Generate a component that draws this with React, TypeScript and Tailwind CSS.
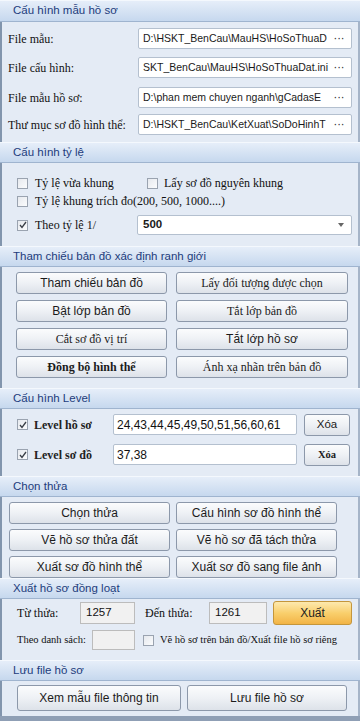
import React from 'react';

const sans = { fontFamily: '"Liberation Sans", Arial, sans-serif' };
const serif = { fontFamily: '"Liberation Serif", "Times New Roman", serif' };

function Header({ title, h = 'h-[21px]' }: { title: string; h?: string }) {
    return (
        <div
            className={`${h} flex items-center pl-[13px] border-t border-b border-t-[#f4f8fd] border-b-[#9fb4cf] bg-gradient-to-b from-[#e6eef9] to-[#c6d8ee] text-[11.5px] text-[#1d3c7c]`}
            style={sans}
        >
            {title}
        </div>
    );
}

function Body({ h, children, className = '' }: { h: string; children: React.ReactNode; className?: string }) {
    return (
        <div className={`${h} overflow-hidden border-l-2 border-r-2 border-l-[#8295ad] border-r-[#a5b4c8] bg-[#e4ebf5] ${className}`}>
            {children}
        </div>
    );
}

function PathInput({ value }: { value: string }) {
    return (
        <div className="w-[214px] h-[21px] flex items-center justify-between bg-white border border-[#b4c0cf] rounded-[2px] pl-[4px] pr-[6px]">
            <span className="whitespace-nowrap text-[10.5px] text-[#1a1a1a]" style={sans}>{value}</span>
            <span className="text-[10px] text-[#333] tracking-[1px]">···</span>
        </div>
    );
}

function Check({ checked = false }: { checked?: boolean }) {
    return (
        <div className="w-[11px] h-[11px] shrink-0 border border-[#9aa3b0] bg-gradient-to-br from-[#e6e9ee] to-[#fbfcfd] flex items-center justify-center">
            {checked && (
                <svg width="8" height="8" viewBox="0 0 8 8">
                    <path d="M1 4 L3 6.5 L7 1" stroke="#3a3f47" strokeWidth="1.3" fill="none" />
                </svg>
            )}
        </div>
    );
}

function Btn({ children, font = sans, bold = false, h = 'h-[22px]', size = 'text-[12px]' }: { children: React.ReactNode; font?: React.CSSProperties; bold?: boolean; h?: string; size?: string }) {
    return (
        <div
            className={`${h} flex items-center justify-center rounded-[3px] border border-[#8c98aa] bg-gradient-to-b from-[#fbfcfd] via-[#eef1f5] to-[#dde2e9] ${size} text-[#1b1b1b] whitespace-nowrap ${bold ? 'font-bold' : ''}`}
            style={font}
        >
            {children}
        </div>
    );
}

export default function App() {
    return (
        <div className="w-[360px] h-[721px] bg-[#dfe7f1] overflow-hidden">
            {/* Cấu hình mẫu hồ sơ */}
            <Header title="Cấu hình mẫu hồ sơ" h="h-[22px]" />
            <Body h="h-[120px]" className="pt-[6px] pl-[6px]">
                {[
                    { label: 'File mẫu:', value: 'D:\\HSKT_BenCau\\MauHS\\HoSoThuaD', mt: '' },
                    { label: 'File cấu hình:', value: 'SKT_BenCau\\MauHS\\HoSoThuaDat.ini', mt: 'mt-[8px]' },
                    { label: 'File mẫu hồ sơ:', value: 'D:\\phan mem chuyen nganh\\gCadasE', mt: 'mt-[9px]' },
                    { label: 'Thư mục sơ đồ hình thể:', value: 'D:\\HSKT_BenCau\\KetXuat\\SoDoHinhT', mt: 'mt-[6px]' },
                ].map((row) => (
                    <div key={row.label} className={`flex items-center ${row.mt}`}>
                        <span className="w-[130px] text-[12px] text-[#111] whitespace-nowrap" style={serif}>{row.label}</span>
                        <PathInput value={row.value} />
                    </div>
                ))}
            </Body>

            {/* Cấu hình tỷ lệ */}
            <Header title="Cấu hình tỷ lệ" />
            <Body h="h-[83px]" className="pt-[12px] pl-[15px]">
                <div className="h-[16px] flex items-center text-[12px] text-[#111]" style={serif}>
                    <div className="w-[130px] flex items-center gap-[7px]">
                        <Check />
                        <span>Tỷ lệ vừa khung</span>
                    </div>
                    <div className="flex items-center gap-[6px]">
                        <Check />
                        <span>Lấy sơ đồ nguyên khung</span>
                    </div>
                </div>
                <div className="mt-[2px] h-[16px] flex items-center gap-[7px] text-[12px] text-[#111]" style={serif}>
                    <Check />
                    <span>Tỷ lệ khung trích đo(200, 500, 1000....)</span>
                </div>
                <div className="mt-[6px] h-[20px] flex items-center text-[12px] text-[#111]" style={serif}>
                    <div className="w-[120px] flex items-center gap-[7px]">
                        <Check checked />
                        <span>Theo tỷ lệ 1/</span>
                    </div>
                    <div className="w-[215px] h-[20px] flex items-center justify-between bg-white border border-[#b4c0cf] rounded-[2px] pl-[5px] pr-[7px]">
                        <span className="text-[11.5px] text-[#1a1a1a] font-bold" style={sans}>500</span>
                        <svg width="6" height="4" viewBox="0 0 6 4"><path d="M0 0 H6 L3 4 Z" fill="#666" /></svg>
                    </div>
                </div>
            </Body>

            {/* Tham chiếu bản đồ */}
            <Header title="Tham chiếu bản đồ xác định ranh giới" />
            <Body h="h-[121px]" className="pt-[5px] pl-[14px]">
                <div className="grid grid-cols-[151px_172px] gap-x-[9px] gap-y-[6px]">
                    <Btn>Tham chiếu bản đồ</Btn>
                    <Btn font={serif}>Lấy đối tượng được chọn</Btn>
                    <Btn>Bật lớp bản đồ</Btn>
                    <Btn font={serif}>Tắt lớp bản đồ</Btn>
                    <Btn font={serif}>Cắt sơ đồ vị trí</Btn>
                    <Btn>Tắt lớp hồ sơ</Btn>
                    <Btn font={serif} bold>Đồng bộ hình thể</Btn>
                    <Btn font={serif}>Ánh xạ nhãn trên bản đồ</Btn>
                </div>
            </Body>

            {/* Cấu hình Level */}
            <Header title="Cấu hình Level" />
            <Body h="h-[67px]" className="pt-[5px] pl-[15px]">
                {[
                    { label: 'Level hồ sơ', value: '24,43,44,45,49,50,51,56,60,61', mt: '', btnFont: sans, bold: false },
                    { label: 'Level sơ đồ', value: '37,38', mt: 'mt-[9px]', btnFont: serif, bold: true },
                ].map((row) => (
                    <div key={row.label} className={`flex items-center h-[21px] ${row.mt}`}>
                        <div className="w-[96px] flex items-center gap-[6px]">
                            <Check checked />
                            <span className="text-[12px] font-bold text-[#222]" style={serif}>{row.label}</span>
                        </div>
                        <div className="w-[184px] h-[21px] flex items-center bg-white border border-[#b4c0cf] rounded-[2px] pl-[3px]">
                            <span className="text-[12px] text-[#111]" style={sans}>{row.value}</span>
                        </div>
                        <div className="ml-[7px] w-[46px]">
                            <Btn font={row.btnFont} bold={row.bold} size={row.bold ? 'text-[10.5px]' : 'text-[11.5px]'}>Xóa</Btn>
                        </div>
                    </div>
                ))}
            </Body>

            {/* Chọn thửa */}
            <Header title="Chọn thửa" />
            <Body h="h-[81px]" className="pt-[5px] pl-[7px]">
                <div className="grid grid-cols-[161px_161px] gap-x-[6px] gap-y-[5px]">
                    <Btn>Chọn thửa</Btn>
                    <Btn>Cấu hình sơ đồ hình thể</Btn>
                    <Btn>Vẽ hồ sơ thửa đất</Btn>
                    <Btn>Vẽ hồ sơ đã tách thửa</Btn>
                    <Btn>Xuất sơ đồ hình thể</Btn>
                    <Btn>Xuất sơ đồ sang file ảnh</Btn>
                </div>
            </Body>

            {/* Xuất hồ sơ đồng loạt */}
            <Header title="Xuất hồ sơ đồng loạt" />
            <Body h="h-[61px]" className="pt-[2px] pl-[15px]">
                <div className="flex items-center h-[24px] text-[12px] text-[#111]" style={serif}>
                    <span className="w-[63px]">Từ thửa:</span>
                    <div className="w-[55px] h-[22px] flex items-center bg-[#f1f1f1] border border-[#bcbcbc] pl-[5px]">
                        <span className="text-[11.5px]" style={sans}>1257</span>
                    </div>
                    <span className="ml-[10px] w-[64px]">Đến thửa:</span>
                    <div className="w-[58px] h-[22px] flex items-center bg-[#f1f1f1] border border-[#bcbcbc] pl-[5px]">
                        <span className="text-[11.5px]" style={sans}>1261</span>
                    </div>
                    <div className="ml-[6px] w-[79px] h-[24px] flex items-center justify-center rounded-[3px] border border-[#c4963c] bg-gradient-to-b from-[#fde9ad] via-[#f9cf6c] to-[#f2b445] text-[12px] text-[#222]" style={sans}>
                        Xuất
                    </div>
                </div>
                <div className="mt-[5px] flex items-center h-[20px] text-[#111]" style={serif}>
                    <span className="w-[75px] text-[10.5px]">Theo danh sách:</span>
                    <div className="w-[43px] h-[20px] bg-[#f1f1f1] border border-[#bcbcbc]" />
                    <div className="ml-[8px] flex items-center gap-[6px] whitespace-nowrap">
                        <Check />
                        <span className="text-[10.5px]">Vẽ hồ sơ trên bản đồ/Xuất file hồ sơ riêng</span>
                    </div>
                </div>
            </Body>

            {/* Lưu file hồ sơ */}
            <Header title="Lưu file hồ sơ" />
            <Body h="h-[35px]" className="pt-[4px] pl-[15px]">
                <div className="grid grid-cols-[164px_160px] gap-x-[6px]">
                    <Btn h="h-[26px]">Xem mẫu file thông tin</Btn>
                    <Btn h="h-[26px]">Lưu file hồ sơ</Btn>
                </div>
            </Body>
            <div className="h-[5px] bg-[#8f9fb5]" />
        </div>
    );
}
